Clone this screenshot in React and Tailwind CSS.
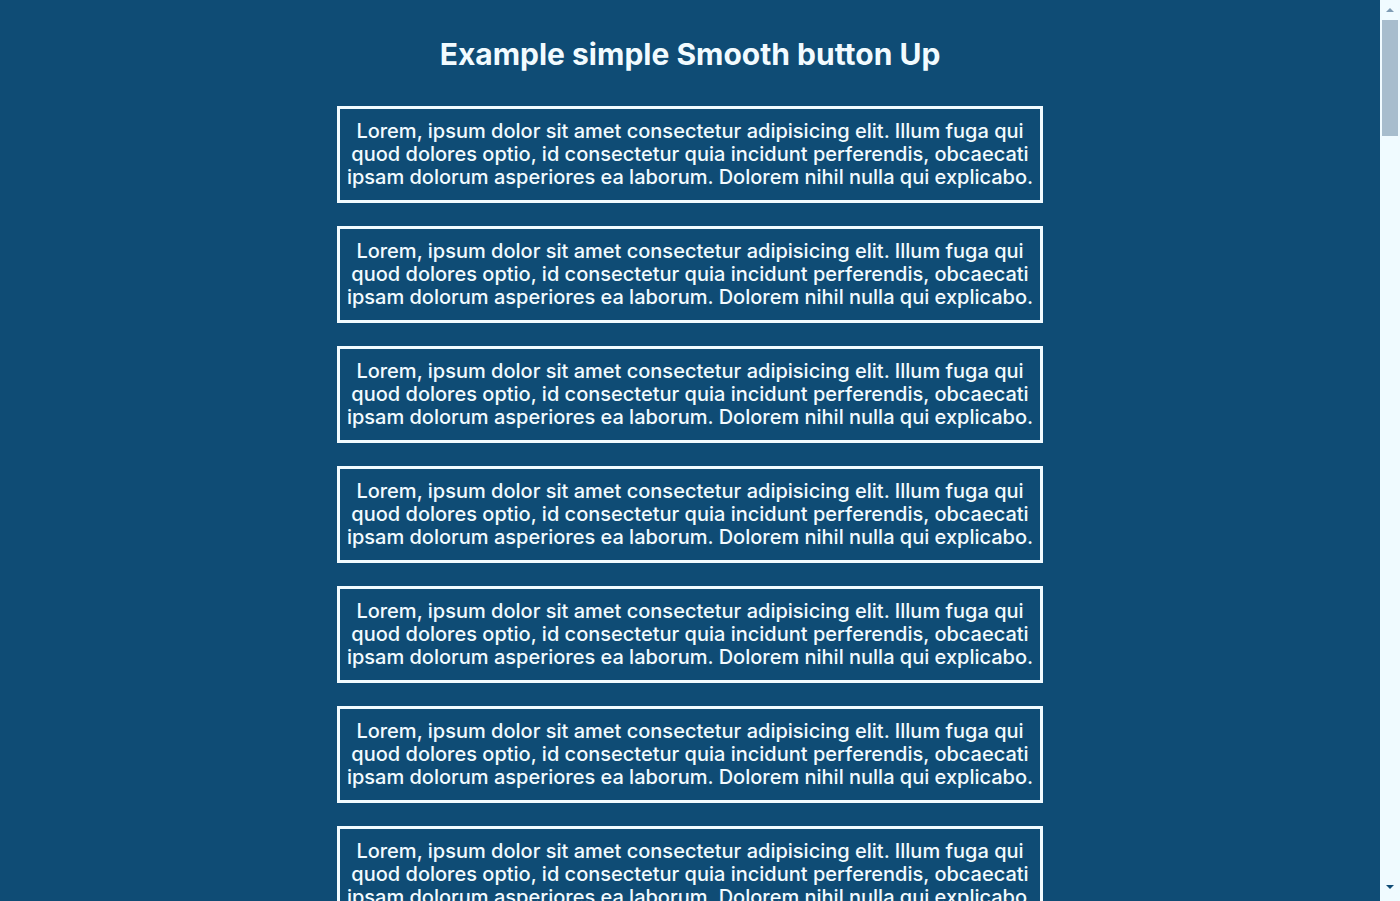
const lines = [
  "Lorem, ipsum dolor sit amet consectetur adipisicing elit. Illum fuga qui",
  "quod dolores optio, id consectetur quia incidunt perferendis, obcaecati",
  "ipsam dolorum asperiores ea laborum. Dolorem nihil nulla qui explicabo.",
];

// only the cards that fit the first screen; the rest sit below the fold
const cards = Array.from({ length: 7 }, (_, i) => i);

function Card() {
  return (
    <div className="w-[706px] border-[3px] border-[#f2fbff] py-[11px] text-center text-[20px] leading-[23px] font-medium text-[#f2fbff]">
      {lines.map((l) => (
        <span key={l} className="block whitespace-nowrap">{l}</span>
      ))}
    </div>
  );
}

function Scrollbar() {
  return (
    <div className="w-5 shrink-0 flex flex-col items-center bg-[#f0fbff]">
      <div className="h-5 flex items-center justify-center">
        <div className="w-0 h-0 border-x-[4px] border-x-transparent border-b-[4px] border-b-[#7f9cb4]" />
      </div>
      <div className="w-4 h-[116px] bg-[#a7bdcd]" />
      <div className="flex-1" />
      <div className="h-4 flex items-start justify-center">
        <div className="w-0 h-0 border-x-[4px] border-x-transparent border-t-[4px] border-t-[#0f4c75]" />
      </div>
    </div>
  );
}

export default function App() {
  return (
    <div className="h-screen flex overflow-hidden bg-[#0f4c75] [font-family:Inter,'Noto_Sans',sans-serif]">
      <main className="flex-1 overflow-hidden flex flex-col items-center">
        <h1 className="mt-[34px] mb-[32px] text-[30px] leading-[40px] font-bold text-[#f2fbff]">
          Example simple Smooth button Up
        </h1>
        <div className="flex flex-col gap-[23px]">
          {cards.map((i) => (
            <Card key={i} />
          ))}
        </div>
      </main>
      <Scrollbar />
    </div>
  );
}
